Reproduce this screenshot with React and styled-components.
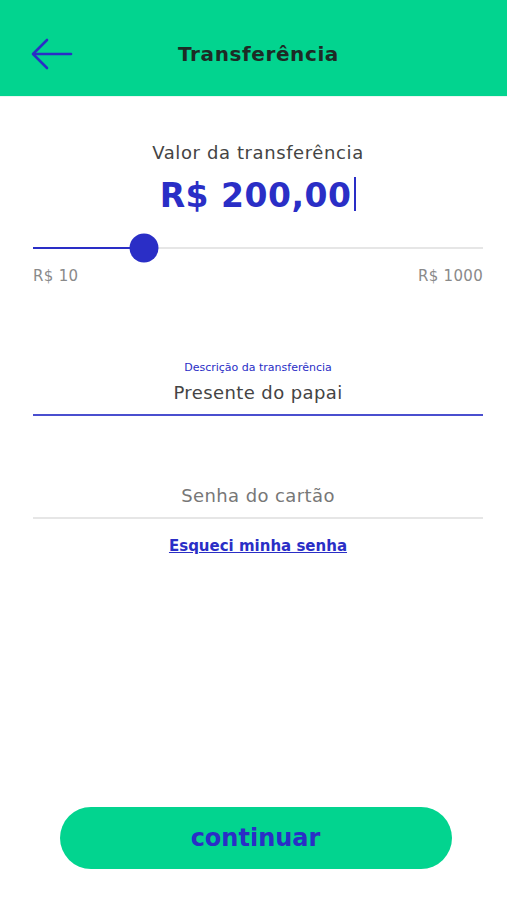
import React from "react";
import styled, { createGlobalStyle } from "styled-components";

const GREEN = "#02d48f";
const BLUE = "#2a2ec6";

const Global = createGlobalStyle`
  * { box-sizing: border-box; }
  html, body { margin: 0; padding: 0; background: #fff; }
  body { font-family: "DejaVu Sans", "Noto Sans", sans-serif; }
`;

const S = {
  Page: styled.div`
    width: 507px;
    height: 900px;
    display: flex;
    flex-direction: column;
    background: #fff;
  `,
  Header: styled.header`
    height: 97px;
    background: ${GREEN};
    border-bottom: 1px solid #e8f8f1;
    display: grid;
    grid-template-columns: 100px 1fr 100px;
    align-items: center;
    padding-top: 12px;
  `,
  Back: styled.button`
    border: 0;
    background: none;
    padding: 0 0 0 31px;
    display: flex;
    align-items: center;
    cursor: pointer;
  `,
  Title: styled.h1`
    margin: 0;
    padding-left: 10px;
    text-align: center;
    font-size: 20px;
    font-weight: 700;
    letter-spacing: 0.6px;
    color: #1d2b25;
  `,
  Body: styled.main`
    flex: 1;
    display: flex;
    flex-direction: column;
    padding: 0 24px 0 33px;
  `,
  Caption: styled.div`
    margin-top: 45px;
    text-align: center;
    font-size: 18px;
    letter-spacing: 0.6px;
    color: #444;
  `,
  Amount: styled.div`
    margin-top: 10px;
    text-align: center;
    font-size: 33px;
    font-weight: 700;
    letter-spacing: 0.5px;
    color: ${BLUE};
    line-height: 46px;
  `,
  Caret: styled.span`
    display: inline-block;
    width: 2px;
    height: 34px;
    background: ${BLUE};
    margin-left: 3px;
    vertical-align: -4px;
  `,
  Slider: styled.div`
    position: relative;
    height: 30px;
    margin-top: 14px;
    display: flex;
    align-items: center;
  `,
  Track: styled.div`
    flex: 1;
    height: 2px;
    background: #e6e6e6;
    position: relative;
  `,
  Fill: styled.div`
    height: 2px;
    background: ${BLUE};
  `,
  Thumb: styled.div`
    position: absolute;
    top: 50%;
    width: 29px;
    height: 29px;
    border-radius: 50%;
    background: ${BLUE};
    transform: translate(-50%, -50%);
  `,
  Range: styled.div`
    display: flex;
    justify-content: space-between;
    margin-top: 4px;
    font-size: 15px;
    letter-spacing: 0.3px;
    color: #8a8a8a;
  `,
  Field: styled.div`
    display: flex;
    flex-direction: column;
    align-items: center;
    margin-top: ${(p) => p.$top}px;
    border-bottom: 2px solid ${(p) => (p.$active ? "#4a4fcf" : "#e6e6e6")};
    padding-bottom: 9px;
  `,
  FieldLabel: styled.div`
    font-size: 11px;
    color: ${BLUE};
    line-height: 14px;
    margin-bottom: 6px;
  `,
  FieldValue: styled.div`
    font-size: 18px;
    line-height: 24px;
    letter-spacing: 0.4px;
    color: ${(p) => (p.$placeholder ? "#777" : "#444")};
  `,
  Forgot: styled.a`
    align-self: center;
    margin-top: 18px;
    font-size: 15px;
    font-weight: 700;
    color: ${BLUE};
    text-decoration: underline;
    cursor: pointer;
  `,
  Footer: styled.div`
    display: flex;
    justify-content: center;
    padding: 0 0 31px 4px;
  `,
  Button: styled.button`
    width: 392px;
    height: 62px;
    border: 0;
    border-radius: 31px;
    background: ${GREEN};
    color: ${BLUE};
    font-family: inherit;
    font-size: 24px;
    font-weight: 700;
    cursor: pointer;
  `,
};

const min = 10;
const max = 1000;
const value = 254;

export default function App() {
  const pct = ((value - min) / (max - min)) * 100;
  return (
    <>
      <Global />
      <S.Page>
        <S.Header>
          <S.Back aria-label="Voltar">
            <svg width="42" height="32" viewBox="0 0 42 32" fill="none" stroke={BLUE} strokeWidth="2.6" strokeLinecap="round" strokeLinejoin="round">
              <path d="M40 16H3" />
              <path d="M16 2L2 16l14 14" />
            </svg>
          </S.Back>
          <S.Title>Transferência</S.Title>
          <div />
        </S.Header>
        <S.Body>
          <S.Caption>Valor da transferência</S.Caption>
          <S.Amount>
            R$ 200,00<S.Caret />
          </S.Amount>
          <S.Slider>
            <S.Track>
              <S.Fill style={{ width: `${pct}%` }} />
              <S.Thumb style={{ left: `${pct}%` }} />
            </S.Track>
          </S.Slider>
          <S.Range>
            <span>R$ 10</span>
            <span>R$ 1000</span>
          </S.Range>
          <S.Field $top={76} $active>
            <S.FieldLabel>Descrição da transferência</S.FieldLabel>
            <S.FieldValue>Presente do papai</S.FieldValue>
          </S.Field>
          <S.Field $top={68}>
            <S.FieldValue $placeholder>Senha do cartão</S.FieldValue>
          </S.Field>
          <S.Forgot>Esqueci minha senha</S.Forgot>
        </S.Body>
        <S.Footer>
          <S.Button>continuar</S.Button>
        </S.Footer>
      </S.Page>
    </>
  );
}
